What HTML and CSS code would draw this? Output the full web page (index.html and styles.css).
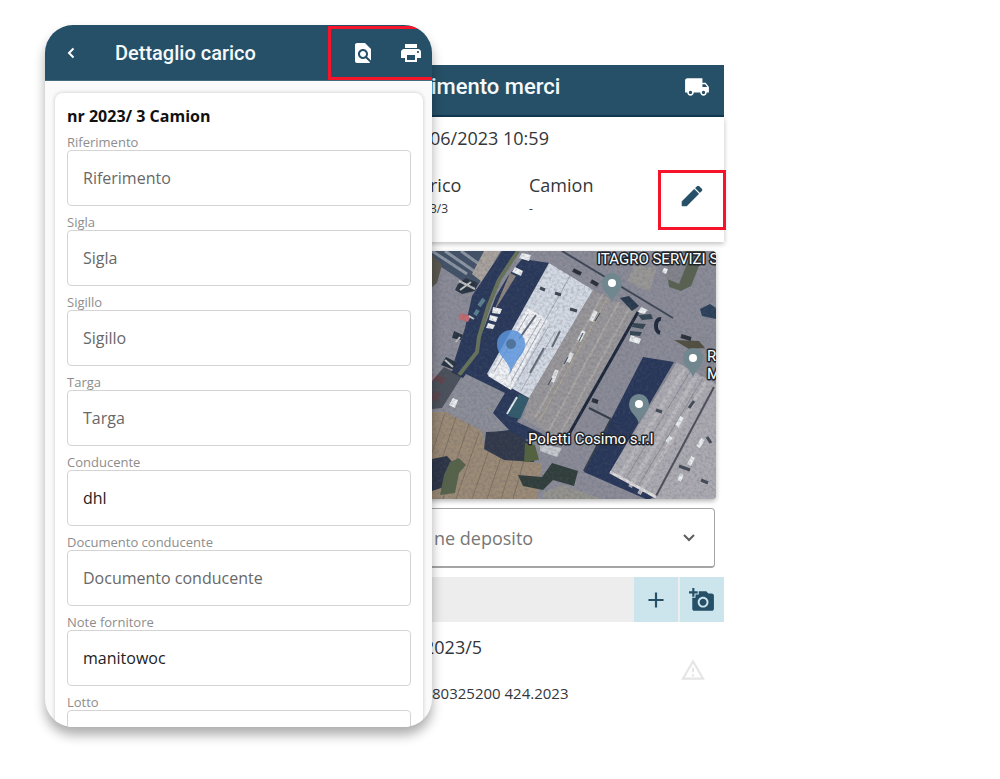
FILE: index.html
```html
<!DOCTYPE html>
<html lang="it">
<head>
<meta charset="utf-8">
<meta name="viewport" content="width=device-width, initial-scale=1">
<title>Dettaglio carico</title>
<link rel="stylesheet" href="styles.css">
</head>
<body>
<main class="stage">
  <section class="detail">
    <header class="detail-bar">
      <button class="icon-btn back" aria-label="Indietro"><svg viewBox="0 0 10 14" width="10" height="14"><path d="M7.500 2.500 3 7l4.500 4.500" fill="none" stroke="currentColor" stroke-width="2"/></svg></button>
      <h1 class="title">Dettaglio carico</h1>
      <div class="marked-actions">
        <button class="icon-btn" aria-label="Anteprima"><svg viewBox="0 0 24 24" width="24" height="24"><path fill="currentColor" d="M20 19.590V8l-6-6H6c-1.100 0-1.990.9-1.990 2L4 20c0 1.100.89 2 1.990 2H18c.45 0 .85-.15 1.190-.4l-4.430-4.430c-.8.520-1.740.83-2.760.83-2.760 0-5-2.240-5-5s2.240-5 5-5 5 2.240 5 5c0 1.020-.31 1.960-.83 2.750L20 19.590zM9 13c0 1.660 1.340 3 3 3s3-1.340 3-3-1.340-3-3-3-3 1.340-3 3z"/></svg></button>
        <button class="icon-btn" aria-label="Stampa"><svg viewBox="0 0 24 24" width="24" height="24"><path fill="currentColor" d="M19 8H5c-1.660 0-3 1.340-3 3v6h4v4h12v-4h4v-6c0-1.660-1.340-3-3-3zm-3 11H8v-5h8v5zm3-7c-.55 0-1-.45-1-1s.45-1 1-1 1 .45 1 1-.45 1-1 1zm-1-9H6v4h12V3z"/></svg></button>
      </div>
    </header>
    <form class="card">
      <h2 class="card-title">nr 2023/ 3 Camion</h2>
      <div class="field"><label for="rif">Riferimento</label><input id="rif" type="text" placeholder="Riferimento"></div>
      <div class="field"><label for="sigla">Sigla</label><input id="sigla" type="text" placeholder="Sigla"></div>
      <div class="field"><label for="sigillo">Sigillo</label><input id="sigillo" type="text" placeholder="Sigillo"></div>
      <div class="field"><label for="targa">Targa</label><input id="targa" type="text" placeholder="Targa"></div>
      <div class="field"><label for="cond">Conducente</label><input id="cond" type="text" value="dhl"></div>
      <div class="field"><label for="doc">Documento conducente</label><input id="doc" type="text" placeholder="Documento conducente"></div>
      <div class="field"><label for="note">Note fornitore</label><input id="note" type="text" value="manitowoc"></div>
      <div class="field"><label for="lotto">Lotto</label><input id="lotto" type="text"></div>
    </form>
  </section>

  <section class="receipt">
    <header class="receipt-bar">
      <h2 class="title receipt-title">imento merci</h2>
      <button class="icon-btn" aria-label="Camion"><svg viewBox="0 0 24 24" width="26" height="26"><path fill="currentColor" d="M20 8h-3V4H3c-1.100 0-2 .9-2 2v11h2c0 1.660 1.340 3 3 3s3-1.340 3-3h6c0 1.660 1.340 3 3 3s3-1.340 3-3h2v-5l-3-4zM6 18.500c-.83 0-1.500-.67-1.500-1.500s.67-1.500 1.500-1.500 1.500.67 1.500 1.500-.67 1.500-1.500 1.500zm13.500-9 1.960 2.500H17V9.500h2.500zM18 18.500c-.83 0-1.500-.67-1.500-1.500s.67-1.500 1.500-1.500 1.500.67 1.500 1.500-.67 1.500-1.500 1.500z"/></svg></button>
    </header>
    <div class="summary">
      <p class="date">06/2023 10:59</p>
      <div class="summary-row">
        <dl class="pair"><dt>rico</dt><dd>3/3</dd></dl>
        <dl class="pair"><dt>Camion</dt><dd>-</dd></dl>
        <button class="edit" aria-label="Modifica"><svg viewBox="0 0 24 24" width="26" height="26"><path fill="currentColor" stroke="currentColor" stroke-width="1" stroke-linejoin="round" d="M3 17.250V21h3.750L17.810 9.940l-3.750-3.750L3 17.250zM20.710 7.040c.39-.39.39-1.020 0-1.410l-2.340-2.340c-.39-.39-1.020-.39-1.410 0l-1.430 1.430 3.750 3.750 1.430-1.430z"/></svg></button>
      </div>
    </div>
    <div class="map">
      <svg class="map-art" viewBox="412 251 304 248" preserveAspectRatio="xMaxYMid slice" role="img" aria-label="Mappa satellitare">
        <defs>
          <filter id="grain" x="0" y="0" width="1" height="1">
            <feTurbulence type="fractalNoise" baseFrequency=".35" numOctaves="3" seed="7" result="n"/>
            <feColorMatrix in="n" type="matrix" values="0 0 0 0 .1  0 0 0 0 .11  0 0 0 0 .15  1.600 0 0 0 -.62"/>
          </filter>
          <g id="pin"><path d="M0 20C-2 11-10 9-10 0a10 10 0 0 1 20 0C10 9 2 11 0 20z" fill="#71878f"/><circle r="4" fill="#fff"/></g>
        </defs>
        <rect x="400" y="240" width="330" height="270" fill="#8b8c98"/>
        <!-- roofs at the upper left -->
        <path d="M432 251h70l-27 38-43-28z" fill="#425167"/>
        <path d="m432 251 35 23m-22-23 29 20m-13-20 18 13" stroke="#8e98a5" stroke-width="3"/>
        <path d="m484 251 17 0-19 31-10-8z" fill="#aaa39e"/>
        <path d="m432 255 10 10-5 18-5 4z" fill="#5b5850"/>
        <path d="m502 251 15 0-19 32-14 42-5 27-20 25-6-12 12-37 7-32z" fill="#29385a"/>
        <path d="m522 259 28 4-63 111 42 24-12 24 26 12-24 8-26-12-11-18 12-18-43-22 27-28 18-48 12-20z" fill="#29385a"/>
        <path d="m510 273 6 3-18 29-5 8z" fill="#8c8580"/>
        <path d="m518 251-19 29-11 27-9 30-2 15-18 23" fill="none" stroke="#68745a" stroke-width="4"/>
        <path d="m466 374 39 19-12 20 16 17-14 2-46-20 4-20z" fill="#8d8f99"/>
        <!-- fields -->
        <path d="m432 412 14 0 36 19 4 20 56 13-5 35H432z" fill="#9c8b76"/>
        <path d="m445 413-13 40m24-36-24 72m37-65-26 75m36-66-23 66m35-55-19 55m30-45-15 45m27-42-13 42m23-39-11 39" stroke="#807360" stroke-width="1"/>
        <path d="m486 432 24-1 22 13 2 18-30-2-20-11z" fill="#303849"/>
        <path d="m432 459 15-3 7 8-4 21-18 6z" fill="#2c3446"/>
        <path d="m450 462 9-4 7 7-7 8-4 20-15 2 4-20z" fill="#566349"/>
        <path d="m518 475 24 2 10-14 26 8-4 15-21-6-10 10-20-4z" fill="#303e3b"/>
        <path d="m525 443 10 2 4 15-15 2z" fill="#54633e"/>
        <path d="m540 444 22 4-5 9-17-6z" fill="#c6cace"/>
        <path d="m544 492 18-7 40 14h-60z" fill="#95948e"/>
        <!-- white warehouse -->
        <path d="m549 263 44 27-64 108-42-24z" fill="#d4dae4"/>
        <path d="m528 308 20 12-37 70-23-14z" fill="#f0f2f6"/>
        <path d="m570 276-59 106m17-68-34 58m47-53-32 55m39-47-31 54m38-49-33 57" stroke="#a7acb6" stroke-width="1"/>
        <path d="m536 315-17 24m25 9-14 25m30-42-8 16" stroke="#626b78" stroke-width="2"/>
        <path d="m540 288 5 2m10 3 6 2m9 14 7 2" stroke="#3d4653" stroke-width="3"/>
        <!-- long beige warehouse -->
        <path d="m593 290 45 22-73 131-42-25 6-20z" fill="#99979a"/>
        <path d="m603 294-68 124m84-116-70 128m81-123-71 129" stroke="#aaa7a5" stroke-width="2"/>
        <path d="m608 297-69 124" stroke="#b4a88d"/>
        <path d="m638 312-74 131" stroke="#1d263a" stroke-width="3"/>
        <path d="m596 311-5 10m-7 10-5 10m-7 12-4 9m-11 8-5 12" stroke="#e5e9ea" stroke-width="4"/>
        <path d="m600 313-5 8m-12 12-4 8m-11 16-4 7m-12 14-4 7" stroke="#384457" stroke-width="1"/>
        <path d="m519 394 10 4-9 21-12-3z" fill="#315b6c"/><path d="m517 397-10 17" stroke="#e2eef0" stroke-width="2"/>
        <!-- road and yard -->
        <path d="m562 251 111 67" stroke="#3e4656" stroke-width="2"/>
        <path d="m627 280 7-14 23 1-7 24-11-3z" fill="#a19c96" opacity=".7"/>
        <path d="m643 357 31 5-64 110 46 24-8 4-64-28z" fill="#273659"/>
        <path d="m589 408 22 11-27 52" fill="none" stroke="#333c49" stroke-width="2"/>
        <path d="m667 272 17-21h21l-14 35-10 5-12-4z" fill="#596251"/>
        <path d="m671 251 20 3-12 30-14-6z" fill="#84858c"/>
        <path d="m700 309 10-5 6 4v11l-14-3z" fill="#2a405a"/>
        <path d="m674 340 25 1 6 7-16 1z" fill="#514f40"/>
        <path d="m620 298 9-2 10 10-7 5z" fill="#29394d"/>
        <!-- right warehouse -->
        <path d="m677 362 39 22v115h-60l-46-27z" fill="#adabb2"/>
        <path d="m684 369-65 109m77-102-66 111m76-105-67 112" stroke="#bbb9be" stroke-width="4"/>
        <path d="m691 370-65 108m77-100-66 110" stroke="#918f98"/>
        <path d="m714 387-58 109" stroke="#4d4f5a" stroke-width="2"/>
        <path d="m610 472 46 25" stroke="#e1dfdf" stroke-width="3"/>
        <path d="m682 417-5 9m-6 11-4 5m36-3-5 8m-5 10-4 8m-7 9-3 7" stroke="#e9eef1" stroke-width="4"/>
        <path d="m694 401-5 7m-33 2 6 2m17 54 11 4m11 10 7 3m-1-46 4 6" stroke="#424b56" stroke-width="3"/>
        <!-- parked vehicles -->
        <g fill="#eff2f3">
          <path d="m522 253 9 2-2 6-10-3zM515 267l8 4-2 5-9-4zM493 307l9 2-2 5-8-1zM490 315l8 2-2 5-7-2zM488 323l7 2-2 4-7-1zM453 398l5 2-3 8-6-3zM641 307l7 3-4 4-6-2zM631 335l10 4-2 5-10-3zM664 268l4 1-2 5-4-2z"/>
        </g>
        <path d="m638 315 13-1 2 5-11 1zm-5 8 13 1-3 5-11-2zm-3 8 12 1-2 4-10-1z" fill="#344653"/>
        <path d="m661 319c-6-1-7 12-1 14" fill="none" stroke="#20283b" stroke-width="4"/>
        <path d="m461 313 10 3-3 6-10-3zM436 375l10 3-3 6-11-4zM433 390l8 4-4 8-5-3z" fill="#c46b71"/>
        <path d="m458 284 8-6 12 5-3 8-13 3-7-4zM454 331l9 4-2 5-9-2zM446 357l10 5-2 8-13-5z" fill="#283342"/>
        <path d="m459 281 16 8m-15 1 11-8m-26 78 8 7m7-30-4 5m13-26 5 3" stroke="#c5c6c4" stroke-width="2"/>
        <path d="m484 299-5 7m-1 4-3 5" stroke="#5a7f8f" stroke-width="4"/>
        <path d="m432 381 12-14 18 9-20 32-10 1z" fill="#29313a" opacity=".65"/>
        <path d="m592 400 6 2m83-66 10 3m-118-69 8 4m10 7 7 4" stroke="#292e39" stroke-width="4"/>
        <path d="m432 251h284v248H432z" filter="url(#grain)" opacity=".4"/>
        <!-- markers and place names -->
        <path d="M511 374c-2-15-14-17-14-30a14 14 0 0 1 28 0c0 13-12 15-14 30z" fill="#5b93da" opacity=".85"/><circle cx="511" cy="344" r="5" fill="#50749c"/>
        <use href="#pin" x="612" y="283"/><use href="#pin" x="693" y="358"/><use href="#pin" x="639" y="404"/>
        <g class="place">
          <text x="597" y="264">ITAGRO SERVIZI S</text>
          <text x="528" y="444">Poletti Cosimo s.r.l</text>
          <text x="707" y="361">R</text>
          <text x="707" y="379">M</text>
        </g>
      </svg>
    </div>
    <div class="select-wrap">
      <select class="select" aria-label="Posizione deposito"><option>ne deposito</option></select>
      <svg class="chevron" viewBox="0 0 14 10" width="14" height="10"><path d="m2 2 5 5 5-5" fill="none" stroke="currentColor" stroke-width="2"/></svg>
    </div>
    <div class="toolbar">
      <button class="tool" aria-label="Aggiungi"><svg viewBox="0 0 24 24" width="26" height="26"><path fill="currentColor" d="M19 13h-6v6h-2v-6H5v-2h6V5h2v6h6v2z"/></svg></button>
      <button class="tool" aria-label="Aggiungi foto"><svg viewBox="0 0 24 24" width="26" height="26"><path fill="currentColor" d="M3 4V1h2v3h3v2H5v3H3V6H0V4h3zm3 6V7h3V4h7l1.830 2H21c1.100 0 2 .9 2 2v12c0 1.100-.9 2-2 2H5c-1.100 0-2-.9-2-2V10h3zm7 9c2.760 0 5-2.240 5-5s-2.240-5-5-5-5 2.240-5 5 2.240 5 5 5zm-3.200-5c0 1.770 1.430 3.200 3.200 3.200s3.200-1.430 3.200-3.200-1.430-3.200-3.200-3.200-3.200 1.430-3.200 3.200z"/></svg></button>
    </div>
    <article class="item">
      <div class="item-text">
        <p class="item-code">2023/5</p>
        <p class="item-lot">80325200 424.2023</p>
      </div>
      <svg class="warn" viewBox="0 0 24 24" width="26" height="26"><path fill="currentColor" d="M12 5.990 19.530 19H4.470L12 5.990M12 2 1 21h22L12 2zm1 14h-2v2h2v-2zm0-6h-2v4h2v-4z"/></svg>
    </article>
  </section>
</main>
</body>
</html>
```
FILE: styles.css
```css
* { box-sizing: border-box; }
body {
  margin: 0;
  background: #fff;
  color: #33363a;
  font-family: "Open Sans", "Noto Sans", sans-serif;
}
h1, h2, p, dl, dd { margin: 0; }
button { border: 0; padding: 0; background: none; color: inherit; cursor: pointer; }
svg { display: block; }

.stage {
  display: grid;
  grid-template-columns: 387fr 292fr 231fr;
  align-items: start;
  padding: 25px 45px 52px;
}
.title { font: 500 20px/28px Roboto, sans-serif; color: #f5f9fb; white-space: nowrap; }
.receipt-title { font-size: 22px; }
.icon-btn { display: grid; place-items: center; color: #fff; }

.detail {
  position: relative;
  z-index: 1;
  height: 702px;
  overflow: hidden;
  border-radius: 28px;
  background: #fafafa;
  box-shadow: 0 8px 12px rgba(0, 0, 0, .32);
}
.detail-bar {
  display: flex;
  align-items: center;
  height: 56px;
  padding-left: 20px;
  background: #255067;
  border-bottom: 1px solid #456a7e;
}
.detail-bar .title { flex: 1; margin-left: 38px; }
.back { width: 12px; height: 24px; }
.marked-actions {
  display: flex;
  align-items: center;
  gap: 24px;
  height: 54px;
  padding: 0 9px 0 20px;
  border: 3px solid #f5142a;
  border-right: 0;
}
.card {
  margin: 12px 9px 0 10px;
  padding: 13px 12px;
  border-radius: 8px;
  background: #fff;
  box-shadow: 0 0 4px rgba(0, 0, 0, .2);
}
.card-title { font-size: 16px; line-height: 20px; font-weight: 700; color: #111; }
.field { display: flex; flex-direction: column; }
.field label { padding-top: 8px; font-size: 13px; line-height: 16px; color: #8d8d8d; }
.field input {
  width: 100%;
  height: 56px;
  padding: 0 15px;
  border: 1px solid #d4d4d4;
  border-radius: 4px;
  background: #fff;
  color: #222;
  font: 16px/24px "Open Sans", "Noto Sans", sans-serif;
}
.field input::placeholder { color: #686868; opacity: 1; }

.receipt {
  margin: 40px 0 0 -20px;
  background: #fff;
}
.receipt-bar {
  display: flex;
  align-items: center;
  justify-content: space-between;
  height: 52px;
  padding: 0 14px 6px 19px;
  background: #255067;
  border-bottom: 2px solid #123a52;
}
.summary {
  height: 125px;
  padding: 9px 0 0 18px;
  box-shadow: 0 2px 5px rgba(0, 0, 0, .25);
}
.date { font-size: 18px; line-height: 24px; }
.summary-row {
  display: grid;
  grid-template-columns: 99fr 129fr 68px;
  align-items: start;
  margin: 20px -2px 0 0;
}
.pair { padding-top: 3px; }
.pair dt { font-size: 18px; line-height: 24px; }
.pair dd { font-size: 12px; line-height: 24px; }
.edit {
  display: grid;
  place-items: center;
  height: 60px;
  padding-bottom: 8px;
  border: 3px solid #f5142a;
  background: #fff;
  color: #255067;
}
.map {
  height: 248px;
  margin: 9px 8px 0 0;
  overflow: hidden;
  border-radius: 4px;
  box-shadow: 0 2px 5px rgba(0, 0, 0, .3);
}
.map-art { width: 100%; height: 100%; }
.place text {
  font: 15px Roboto, sans-serif;
  fill: #fff;
  stroke: #20242b;
  stroke-width: 3px;
  stroke-linejoin: round;
  paint-order: stroke;
}
.select-wrap {
  display: grid;
  align-items: center;
  margin: 9px 9px 0 0;
}
.select, .chevron { grid-area: 1 / 1; }
.select {
  appearance: none;
  width: 100%;
  height: 60px;
  padding: 0 40px 0 21px;
  border: 1px solid #a5a5a5;
  border-bottom-width: 2px;
  border-radius: 4px;
  background: #fff;
  color: #777;
  font: 18px/24px "Open Sans", "Noto Sans", sans-serif;
}
.chevron { justify-self: end; margin-right: 19px; color: #5d5d5d; pointer-events: none; }
.toolbar {
  display: flex;
  justify-content: flex-end;
  gap: 2px;
  margin-top: 9px;
  background: #ededed;
}
.tool {
  display: grid;
  place-items: center;
  width: 44px;
  height: 45px;
  background: #cce5ed;
  color: #255067;
}
.item {
  display: flex;
  align-items: center;
  justify-content: space-between;
  padding: 13px 18px 0 12px;
}
.item-text { display: grid; gap: 22px; }
.item-code { font-size: 18px; line-height: 24px; }
.item-lot { padding-left: 8px; font-size: 15px; line-height: 24px; }
.warn { color: #e5e5e5; }
```
